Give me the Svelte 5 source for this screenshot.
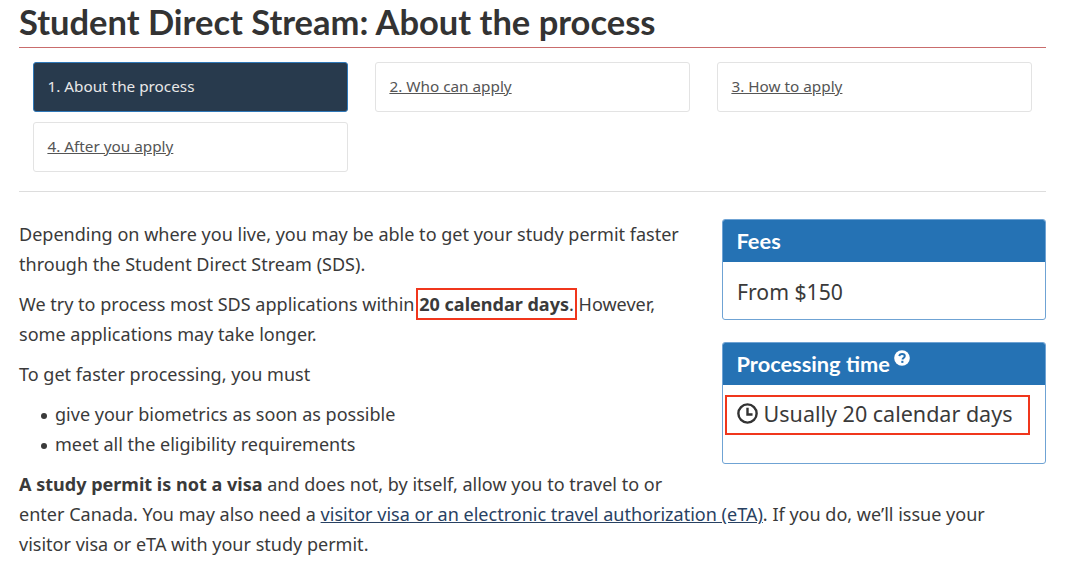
<script>
  const steps = [
    { label: '1. About the process', active: true },
    { label: '2. Who can apply' },
    { label: '3. How to apply' },
    { label: '4. After you apply' }
  ];
</script>

<main class="page">
  <h1>Student Direct Stream: About the process</h1>

  <nav class="steps">
    {#each steps as s}
      {#if s.active}
        <div class="step active">{s.label}</div>
      {:else}
        <div class="step"><a href="#s">{s.label}</a></div>
      {/if}
    {/each}
  </nav>

  <hr />

  <div class="content">
    <aside class="side">
      <section class="panel">
        <h2>Fees</h2>
        <div class="body fee">From $150</div>
      </section>
      <section class="panel">
        <h2>Processing time <svg class="q" viewBox="0 0 16 16" width="16" height="16"><circle cx="8" cy="8" r="7.8" fill="#fff"/><path d="M5.300 6.200c.2-1.500 1.300-2.300 2.800-2.300 1.600 0 2.700.9 2.700 2.200 0 1.100-.7 1.600-1.400 2.100-.6.4-.8.7-.8 1.200" fill="none" stroke="#2572b4" stroke-width="2"/><rect x="7.300" y="10.800" width="2.100" height="2.100" fill="#2572b4"/></svg></h2>
        <div class="body time">
          <div class="mark"><svg class="clock" viewBox="0 0 20 20" width="21" height="21"><circle cx="10" cy="10" r="8.700" fill="none" stroke="#333" stroke-width="2.300"/><path d="M10 4.600V10.900H14.800" fill="none" stroke="#333" stroke-width="2.300"/></svg> Usually 20 calendar days</div>
        </div>
      </section>
    </aside>

    <p>Depending on where you live, you may be able to get your study permit faster through the Student Direct Stream (SDS).</p>
    <p>We try to process most SDS applications within <span class="hl"><strong>20 calendar days</strong>.</span> However, some applications may take longer.</p>
    <p>To get faster processing, you must</p>
    <ul>
      <li>give your biometrics as soon as possible</li>
      <li>meet all the eligibility requirements</li>
    </ul>
    <p><strong>A study permit is not a visa</strong> and does not, by itself, allow you to travel to or enter Canada. You may also need a <a class="link" href="#v">visitor visa or an electronic travel authorization (eTA)</a>. If you do, we’ll issue your visitor visa or eTA with your study permit.</p>
  </div>
</main>

<style>
  :global(body) {
    margin: 0;
    background: #fff;
    overflow: hidden;
  }
  .page {
    width: 1027px;
    margin-left: 19px;
    color: #3a3a3a;
    font-family: "Noto Sans", sans-serif;
    font-size: 18.05px;
    line-height: 30px;
  }
  h1 {
    margin: 0;
    box-sizing: border-box;
    height: 48px;
    padding-top: 2px;
    font-family: Lato, sans-serif;
    font-weight: 700;
    font-size: 34.5px;
    line-height: 40px;
    color: #333;
    border-bottom: 1px solid #c96c6c;
  }
  .steps {
    display: grid;
    grid-template-columns: repeat(3, 315px);
    gap: 10px 27px;
    margin: 14px 0 0 14px;
  }
  .step {
    box-sizing: border-box;
    height: 50px;
    padding: 0 13.4px 2px;
    display: flex;
    align-items: center;
    border: 1px solid #e3e3e3;
    border-radius: 3px;
    font-size: 15.3px;
    background: #fff;
  }
  .step a {
    color: #555;
  }
  .step.active {
    background: #283a4d;
    border-color: #2f78b8;
    color: #e8e8e8;
  }
  hr {
    border: 0;
    border-top: 1px solid #ddd;
    margin: 19px 0 0;
  }
  .content {
    padding-top: 27px;
  }
  .side {
    float: right;
    width: 324px;
    margin-left: 32px;
  }
  .panel {
    border: 1px solid #6fa3d4;
    border-radius: 3px;
    margin-bottom: 22px;
    overflow: hidden;
  }
  .panel h2 {
    margin: 0;
    height: 42px;
    box-sizing: border-box;
    padding: 0 13.5px;
    background: #2572b4;
    color: #fff;
    font-family: Lato, sans-serif;
    font-weight: 700;
    font-size: 21.8px;
    line-height: 42px;
    white-space: nowrap;
  }
  .q {
    vertical-align: 6px;
    margin-left: -1px;
  }
  .body {
    box-sizing: border-box;
    font-size: 21.2px;
  }
  .fee {
    height: 57px;
    padding: 15px 14px 0;
  }
  .time {
    height: 78px;
    padding: 10px 2px 0;
    font-size: 21.5px;
  }
  .mark {
    box-sizing: border-box;
    width: 305px;
    height: 40px;
    padding: 2px 0 0 10px;
    border: 2px solid #f0361c;
    white-space: nowrap;
    line-height: 30px;
  }
  .clock {
    vertical-align: -2px;
  }
  p {
    margin: 0 0 10px;
    max-width: 1010px;
  }
  ul {
    margin: 0 0 10px;
    padding: 0 0 0 36px;
    list-style: none;
  }
  li::before {
    content: "";
    display: inline-block;
    width: 6px;
    height: 6px;
    margin: 0 8.500px 0 -14.500px;
    border-radius: 50%;
    background: #3a3a3a;
    vertical-align: 2.500px;
  }
  .hl {
    padding: 1px 0;
    outline: 2px solid #f0361c;
    outline-offset: 1px;
  }
  strong {
    font-weight: 700;
  }
  .link {
    color: #284162;
  }
</style>
